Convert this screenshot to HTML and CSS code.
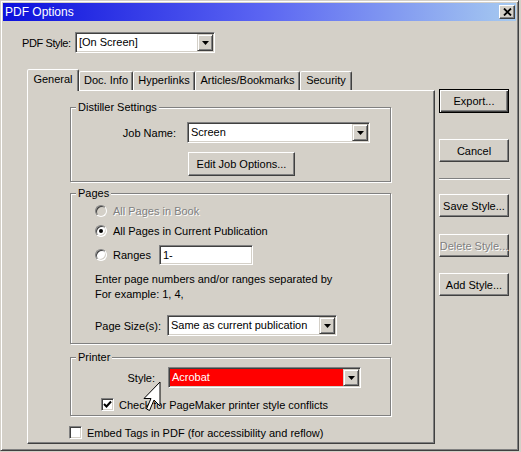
FILE: index.html
```html
<!DOCTYPE html>
<html>
<head>
<meta charset="utf-8">
<link rel="stylesheet" href="styles.css">
</head>
<body>
<div class="window">
  <div class="titlebar">
    <span class="title">PDF Options</span>
    <div class="closebtn"><svg width="9" height="8" viewBox="0 0 9 8"><path d="M1 0.5 L8 7.5 M8 0.5 L1 7.5" stroke="#000" stroke-width="1.8" fill="none"/></svg></div>
  </div>
  <div class="main">
    <div class="style-row">
      <span class="pdf-lbl">PDF Style:</span>
      <div class="select sel-pdf"><span class="sel-text">[On Screen]</span><span class="sel-btn"><svg width="7" height="4" viewBox="0 0 7 4"><path d="M0 0H7L3.5 4Z" fill="#000"/></svg></span></div>
    </div>
    <div class="content">
      <div class="tabctl">
        <div class="tabs">
          <div class="tab active t-gen">General</div>
          <div class="tab t-doc">Doc. Info</div>
          <div class="tab t-hyp">Hyperlinks</div>
          <div class="tab t-art">Articles/Bookmarks</div>
          <div class="tab t-sec">Security</div>
        </div>
        <div class="panel">
          <fieldset class="group g-distiller">
            <legend>Distiller Settings</legend>
            <div class="job-row">
              <span class="job-lbl">Job Name:</span>
              <div class="select sel-job"><span class="sel-text">Screen</span><span class="sel-btn"><svg width="7" height="4" viewBox="0 0 7 4"><path d="M0 0H7L3.5 4Z" fill="#000"/></svg></span></div>
            </div>
            <div class="btn btn-edit">Edit Job Options...</div>
          </fieldset>
          <fieldset class="group g-pages">
            <legend>Pages</legend>
            <div class="opt opt-1 disabled"><span class="radio"></span><span class="opt-text">All Pages in Book</span></div>
            <div class="opt opt-2"><span class="radio checked"></span><span class="opt-text">All Pages in Current Publication</span></div>
            <div class="opt opt-3"><span class="radio"></span><span class="ranges-lbl">Ranges</span><div class="textbox">1-</div></div>
            <p class="hint">Enter page numbers and/or ranges separated by<br>For example: 1, 4,</p>
            <div class="size-row">
              <span class="size-lbl">Page Size(s):</span>
              <div class="select sel-size"><span class="sel-text">Same as current publication</span><span class="sel-btn"><svg width="7" height="4" viewBox="0 0 7 4"><path d="M0 0H7L3.5 4Z" fill="#000"/></svg></span></div>
            </div>
          </fieldset>
          <fieldset class="group g-printer">
            <legend>Printer</legend>
            <div class="pstyle-row">
              <span class="pstyle-lbl">Style:</span>
              <div class="select sel-printer"><span class="sel-text hl">Acrobat</span><span class="sel-btn"><svg width="7" height="4" viewBox="0 0 7 4"><path d="M0 0H7L3.5 4Z" fill="#000"/></svg></span></div>
            </div>
            <div class="chk-row pchk"><span class="checkbox"><svg width="9" height="9" viewBox="0 0 9 9"><polyline points="1,4 3.5,6.5 8,1.5" stroke="#000" stroke-width="2" fill="none"/></svg></span><span>Check for PageMaker printer style conflicts</span></div>
          </fieldset>
          <div class="chk-row embed"><span class="checkbox"></span><span>Embed Tags in PDF (for accessibility and reflow)</span></div>
        </div>
      </div>
      <div class="side">
        <div class="btn btn-default">Export...</div>
        <div class="btn btn-cancel">Cancel</div>
        <div class="sep"></div>
        <div class="btn btn-save">Save Style...</div>
        <div class="btn btn-delete disabled-btn">Delete Style...</div>
        <div class="btn btn-add">Add Style...</div>
      </div>
    </div>
  </div>
  <svg class="cursor" width="19" height="31" viewBox="0 0 19 31"><polygon points="17,1 17,25 11,19 6.5,29.5 3.5,28 8,17.5 1,17.5" fill="#fff" stroke="#000" stroke-width="1"/></svg>
</div>
</body>
</html>
```

FILE: styles.css
```css
* { box-sizing: border-box; }
html, body { margin: 0; padding: 0; }
body {
  background: #d4d0c8;
  font-family: "Liberation Sans", Arial, sans-serif;
  font-size: 11px;
  color: #000;
  width: 521px;
  height: 452px;
  overflow: hidden;
}
.window {
  position: relative;
  width: 519px;
  height: 451px;
  background: #d4d0c8;
  border: 1px solid;
  border-color: #d4d0c8 #404040 #404040 #d4d0c8;
  box-shadow: inset 1px 1px #fff, inset -1px -1px #808080;
  padding: 2px;
  display: flex;
  flex-direction: column;
}
.titlebar {
  height: 18px;
  display: flex;
  align-items: center;
  padding: 0 1px 0 2px;
  background: linear-gradient(90deg, #0c10dc 0%, #5a64f2 50%, #a6caf0 100%);
  color: #fff;
  font-size: 12px;
}
.title { flex: 1; line-height: 18px; white-space: nowrap; }
.closebtn {
  width: 16px;
  height: 14px;
  border: 1px solid;
  border-color: #fff #404040 #404040 #fff;
  box-shadow: inset -1px -1px #808080;
  background: #d4d0c8;
  display: flex;
  align-items: center;
  justify-content: center;
}
.closebtn svg { display: block; }
.main {
  display: flex;
  flex-direction: column;
  padding-top: 11px;
}
.style-row {
  display: flex;
  align-items: center;
  padding-left: 19px;
}
.pdf-lbl { width: 53px; white-space: nowrap; letter-spacing: -0.4px; }
.select {
  display: flex;
  height: 21px;
  border: 1px solid;
  border-color: #808080 #fff #fff #808080;
  box-shadow: inset 1px 1px #404040, inset -1px -1px #d4d0c8;
  padding: 1px;
  background: #fff;
}
.sel-text {
  flex: 1;
  padding-left: 2px;
  line-height: 17px;
  white-space: nowrap;
  overflow: hidden;
}
.sel-text.hl { background: #ff0000; color: #fff; }
.sel-btn {
  width: 16px;
  border: 1px solid;
  border-color: #d4d0c8 #404040 #404040 #d4d0c8;
  box-shadow: inset 1px 1px #fff, inset -1px -1px #808080;
  background: #d4d0c8;
  display: flex;
  align-items: center;
  justify-content: center;
}
.sel-btn svg { display: block; }
.sel-pdf { width: 140px; }
.content {
  display: flex;
  margin-top: 16px;
  padding-left: 24px;
  gap: 4px;
}
.tabctl {
  width: 408px;
  display: flex;
  flex-direction: column;
}
.tabs {
  display: flex;
  align-items: flex-end;
  height: 21px;
}
.tab {
  height: 19px;
  border: 1px solid;
  border-bottom: none;
  border-color: #fff #404040 transparent #fff;
  box-shadow: inset -1px 0 #808080;
  border-radius: 2px 2px 0 0;
  text-align: center;
  line-height: 17px;
  white-space: nowrap;
  background: #d4d0c8;
}
.tab.active {
  height: 22px;
  margin-bottom: -1px;
  line-height: 18px;
  position: relative;
  z-index: 2;
}
.t-gen { width: 52px; }
.t-doc { width: 54px; }
.t-hyp { width: 62px; }
.t-art { width: 105px; }
.t-sec { width: 52px; }
.panel {
  height: 354px;
  border: 1px solid;
  border-color: #fff #404040 #404040 #fff;
  box-shadow: inset -1px -1px #808080;
  padding: 10px 0 0 42px;
  display: flex;
  flex-direction: column;
  align-items: flex-start;
}
.group {
  margin: 0;
  padding: 0;
  min-width: 0;
  width: 321px;
  border: 1px solid #808080;
  box-shadow: 1px 1px #fff, inset 1px 1px #fff;
}
.group legend {
  padding: 0 2px;
  margin-left: 5px;
  line-height: 13px;
  background: #d4d0c8;
}
.job-row {
  display: flex;
  align-items: center;
  margin-top: 8px;
}
.job-lbl { width: 105px; text-align: right; margin-right: 11px; white-space: nowrap; }
.sel-job { width: 183px; }
.btn {
  height: 23px;
  border: 1px solid;
  border-color: #fff #404040 #404040 #fff;
  box-shadow: inset -1px -1px #808080;
  display: flex;
  align-items: center;
  justify-content: center;
  white-space: nowrap;
  background: #d4d0c8;
}
.btn-edit {
  width: 107px;
  height: 24px;
  margin: 9px 0 5px 117px;
}
.g-pages { margin-top: 5px; }
.opt {
  display: flex;
  align-items: center;
  height: 16px;
  padding-left: 24px;
}
.opt-1 { margin-top: 3px; }
.opt-2 { margin-top: 4px; }
.opt-3 { margin-top: 6px; height: 20px; }
.radio {
  width: 12px;
  height: 12px;
  border-radius: 50%;
  border: 1px solid;
  border-color: #808080 #fff #fff #808080;
  box-shadow: inset 1px 1px #404040, inset -1px -1px #d4d0c8;
  background: #fff;
  margin-right: 6px;
  display: flex;
  align-items: center;
  justify-content: center;
  flex: none;
}
.radio.checked::after {
  content: "";
  width: 4px;
  height: 4px;
  border-radius: 50%;
  background: #000;
}
.disabled .radio { background: #d4d0c8; }
.disabled .opt-text { color: #808080; text-shadow: 1px 1px #fff; }
.opt-text { white-space: nowrap; }
.ranges-lbl { width: 46px; }
.textbox {
  width: 94px;
  height: 20px;
  border: 1px solid;
  border-color: #808080 #fff #fff #808080;
  box-shadow: inset 1px 1px #404040, inset -1px -1px #d4d0c8;
  background: #fff;
  padding-left: 3px;
  line-height: 18px;
}
.hint {
  margin: 7px 0 0 0;
  padding-left: 24px;
  line-height: 15px;
  white-space: nowrap;
}
.size-row {
  display: flex;
  align-items: center;
  margin: 13px 0 7px 0;
  padding-left: 24px;
}
.size-lbl { width: 72px; white-space: nowrap; }
.sel-size { width: 170px; }
.g-printer { margin-top: 7px; }
.pstyle-row {
  display: flex;
  align-items: center;
  margin-top: 3px;
}
.pstyle-lbl { width: 84px; text-align: right; margin-right: 13px; }
.sel-printer { width: 193px; }
.chk-row {
  display: flex;
  align-items: center;
  height: 13px;
  white-space: nowrap;
}
.checkbox {
  width: 13px;
  height: 13px;
  border: 1px solid;
  border-color: #808080 #fff #fff #808080;
  box-shadow: inset 1px 1px #404040, inset -1px -1px #d4d0c8;
  background: #fff;
  margin-right: 5px;
  display: flex;
  align-items: center;
  justify-content: center;
  flex: none;
}
.checkbox svg { display: block; }
.pchk { margin: 10px 0 4px 0; padding-left: 30px; }
.embed { margin: 10px 0 0 -1px; }
.side {
  width: 70px;
  display: flex;
  flex-direction: column;
  padding-top: 20px;
}
.btn-default {
  height: 24px;
  border: 1px solid #000;
  box-shadow: inset 1px 1px #fff, inset -1px -1px #404040, inset -2px -2px #808080;
}
.btn-cancel { margin-top: 26px; }
.sep {
  width: 71px;
  height: 2px;
  margin-top: 16px;
  border-top: 1px solid #808080;
  border-bottom: 1px solid #fff;
}
.btn-save { margin-top: 14px; }
.btn-delete { margin-top: 17px; }
.btn-add { margin-top: 16px; }
.disabled-btn { color: #808080; text-shadow: 1px 1px #fff; }
.cursor {
  position: absolute;
  left: 142px;
  top: 380px;
  display: block;
}
```
